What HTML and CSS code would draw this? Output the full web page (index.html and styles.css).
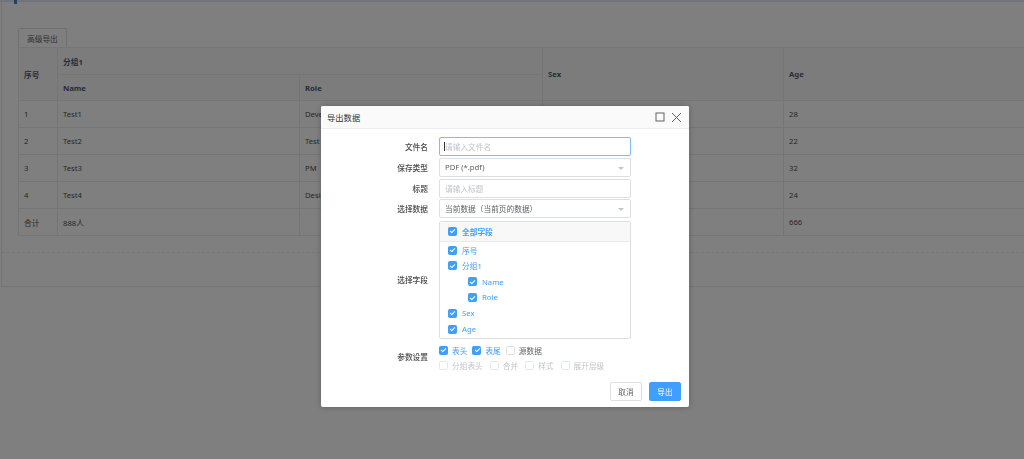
FILE: index.html
```html
<!DOCTYPE html>
<html>
<head>
  <title>导出数据</title>
  <link rel="stylesheet" href="styles.css">
</head>
<body>
  <div class="topbar"><span class="tab-mark"></span></div>

  <div class="page">
    <button class="btn-plain">高级导出</button>
    <table class="grid">
      <colgroup>
        <col style="width: 39px">
        <col style="width: 242px">
        <col style="width: 243px">
        <col style="width: 241px">
        <col style="width: 245px">
      </colgroup>
      <thead>
        <tr class="h1">
          <th rowspan="2">序号</th>
          <th colspan="2">分组1</th>
          <th rowspan="2">Sex</th>
          <th rowspan="2">Age</th>
        </tr>
        <tr class="h2">
          <th>Name</th>
          <th>Role</th>
        </tr>
      </thead>
      <tbody>
        <tr><td>1</td><td>Test1</td><td>Deve</td><td></td><td>28</td></tr>
        <tr><td>2</td><td>Test2</td><td>Test</td><td></td><td>22</td></tr>
        <tr><td>3</td><td>Test3</td><td>PM</td><td></td><td>32</td></tr>
        <tr><td>4</td><td>Test4</td><td>Desi</td><td></td><td>24</td></tr>
        <tr><td>合计</td><td>888人</td><td></td><td></td><td>666</td></tr>
      </tbody>
    </table>
    <div class="pager"></div>
  </div>

  <div class="mask"></div>

  <div class="modal">
    <div class="modal-header">
      <span class="modal-title">导出数据</span>
      <span class="modal-icons">
        <svg width="10" height="10" viewBox="0 0 10 10"><rect x="1" y="1" width="8" height="8" fill="none" stroke="#606266" stroke-width="1"/></svg>
        <svg width="11" height="11" viewBox="0 0 11 11"><path d="M1 1 L10 10 M10 1 L1 10" stroke="#606266" stroke-width="1" fill="none"/></svg>
      </span>
    </div>

    <div class="modal-body">
      <div class="form">
        <label class="form-label">文件名</label>
        <div class="input focus"><span class="caret"></span><span class="placeholder">请输入文件名</span></div>

        <label class="form-label">保存类型</label>
        <div class="input select"><span>PDF (*.pdf)</span><span class="arrow"></span></div>

        <label class="form-label">标题</label>
        <div class="input"><span class="placeholder">请输入标题</span></div>

        <label class="form-label">选择数据</label>
        <div class="input select"><span>当前数据（当前页的数据）</span><span class="arrow"></span></div>

        <label class="form-label">选择字段</label>
        <div class="field-list">
          <div class="field-all"><span class="cb on"></span>全部字段</div>
          <div class="field-items">
            <div class="field"><span class="cb on"></span>序号</div>
            <div class="field"><span class="cb on"></span>分组1</div>
            <div class="field sub"><span class="cb on"></span>Name</div>
            <div class="field sub"><span class="cb on"></span>Role</div>
            <div class="field"><span class="cb on"></span>Sex</div>
            <div class="field"><span class="cb on"></span>Age</div>
          </div>
        </div>

        <label class="form-label">参数设置</label>
        <div class="params">
          <div class="param-line">
            <span class="opt checked"><span class="cb on"></span>表头</span>
            <span class="opt checked"><span class="cb on"></span>表尾</span>
            <span class="opt"><span class="cb"></span>源数据</span>
          </div>
          <div class="param-line">
            <span class="opt disabled"><span class="cb"></span>分组表头</span>
            <span class="opt disabled"><span class="cb"></span>合并</span>
            <span class="opt disabled"><span class="cb"></span>样式</span>
            <span class="opt disabled"><span class="cb"></span>展开层级</span>
          </div>
        </div>
      </div>
    </div>

    <div class="modal-footer">
      <button class="btn-plain">取消</button>
      <button class="btn-primary">导出</button>
    </div>
  </div>
</body>
</html>
```

FILE: styles.css
```css
body {
  margin: 0;
  font-family: "Noto Sans", "Noto Sans CJK SC", sans-serif;
  font-size: 7.7px;
  color: #606266;
  background: #fff;
  overflow: hidden;
  height: 459px;
}

.topbar {
  height: 2px;
  background: #dee8ff;
  position: relative;
}

.tab-mark {
  position: absolute;
  left: 14px;
  top: 0;
  width: 3px;
  height: 4px;
  background: #3f7fe0;
}

.page {
  margin-left: 1px;
  padding: 26px 0 0 16px;
  border-left: 1px solid #e8eaec;
  border-bottom: 1px solid #e8eaec;
  overflow: hidden;
}

.btn-plain {
  display: block;
  height: 19px;
  padding: 0 8px;
  font-family: inherit;
  font-size: 7.7px;
  color: #606266;
  background: #fff;
  border: 1px solid #dcdfe6;
  border-bottom: none;
  border-radius: 2px 2px 0 0;
  cursor: pointer;
}

.grid {
  border-collapse: collapse;
  table-layout: fixed;
  width: 1010px;
  color: #505050;
}

.grid th,
.grid td {
  border: 1px solid #e8eaec;
  padding: 0 5px;
  text-align: left;
  white-space: nowrap;
  overflow: hidden;
}

.grid th {
  background: #f8f8f9;
  color: #515a6e;
  font-weight: bold;
}

.grid .h1 th {
  height: 26px;
}

.grid .h2 th {
  height: 25px;
}

.grid td {
  height: 26px;
}

.pager {
  margin-top: 16px;
  margin-left: -16px;
  height: 33px;
  border-top: 1px dashed #ededed;
}

.mask {
  position: fixed;
  inset: 0;
  background: rgba(0, 0, 0, 0.5);
}

.modal {
  position: fixed;
  left: 321px;
  top: 106px;
  width: 368px;
  height: 301px;
  background: #fff;
  border-radius: 2px;
  box-shadow: 0 0 6px rgba(0, 0, 0, 0.25);
  display: flex;
  flex-direction: column;
}

.modal-header {
  height: 22px;
  border-bottom: 1px solid #ebeef5;
  background: #fafafa;
  border-radius: 2px 2px 0 0;
  display: flex;
  align-items: center;
  justify-content: space-between;
  padding: 0 7px 0 6px;
}

.modal-title {
  font-size: 8.3px;
  color: #303133;
}

.modal-icons {
  display: flex;
  align-items: center;
  gap: 6px;
}

.modal-icons svg {
  display: block;
}

.modal-body {
  flex: 1;
  padding-top: 8px;
}

.form {
  display: grid;
  grid-template-columns: 118px 192px;
  row-gap: 1.8px;
  align-items: center;
}

.form-label {
  text-align: right;
  padding-right: 11px;
  color: #4a4a4a;
  font-weight: 500;
}

.input {
  height: 19px;
  box-sizing: border-box;
  border: 1px solid #dcdfe6;
  border-radius: 2px;
  padding: 0 5px;
  display: flex;
  align-items: center;
  position: relative;
  color: #606266;
}

.input.focus {
  border-color: #7fbcff;
}

.placeholder {
  color: #c0c4cc;
}

.caret {
  width: 1px;
  height: 9px;
  background: #333;
  margin-left: -1px;
}

.arrow {
  position: absolute;
  right: 6px;
  top: 8px;
  width: 0;
  height: 0;
  border-left: 3px solid transparent;
  border-right: 3px solid transparent;
  border-top: 3px solid #c0c4cc;
}

.field-list {
  border: 1px solid #dcdfe6;
  border-radius: 2px;
  height: 118px;
  box-sizing: border-box;
  margin-top: 0.5px;
}

.field-all {
  height: 19px;
  background: #f8f8f9;
  border-bottom: 1px solid #e8eaec;
  display: flex;
  align-items: center;
  padding-left: 8px;
  color: #409eff;
  font-weight: bold;
}

.field-items {
  padding-top: 0.5px;
}

.field {
  height: 15.8px;
  display: flex;
  align-items: center;
  padding-left: 8px;
  color: #409eff;
}

.field.sub {
  padding-left: 28px;
}

.cb {
  display: inline-block;
  width: 9px;
  height: 9px;
  box-sizing: border-box;
  border: 1px solid #dcdfe6;
  border-radius: 1.5px;
  background: #fff;
  margin-right: 5px;
  position: relative;
  flex: none;
}

.cb.on {
  background: #409eff;
  border-color: #409eff;
}

.cb.on::after {
  content: "";
  position: absolute;
  left: 2.3px;
  top: 0.6px;
  width: 2px;
  height: 4px;
  border: solid #fff;
  border-width: 0 1px 1px 0;
  transform: rotate(45deg);
}

.params {
  padding-top: 2px;
}

.param-line {
  height: 15.3px;
  display: flex;
  align-items: center;
  gap: 5px;
}

.param-line + .param-line {
  gap: 7px;
}

.opt {
  display: inline-flex;
  align-items: center;
  color: #606266;
}

.opt .cb {
  margin-right: 4px;
}

.opt.checked {
  color: #409eff;
}

.opt.disabled {
  color: #c0c4cc;
}

.opt.disabled .cb {
  border-color: #e4e7ed;
}

.modal-footer {
  display: flex;
  justify-content: flex-end;
  gap: 7px;
  padding: 0 8px 6px;
}

.modal-footer .btn-plain,
.btn-primary {
  width: 32px;
  height: 19px;
  padding: 0;
  font-family: inherit;
  font-size: 7.7px;
  border-radius: 2px;
  cursor: pointer;
}

.modal-footer .btn-plain {
  border-bottom: 1px solid #dcdfe6;
}

.btn-primary {
  background: #409eff;
  border: 1px solid #409eff;
  color: #fff;
}
```
